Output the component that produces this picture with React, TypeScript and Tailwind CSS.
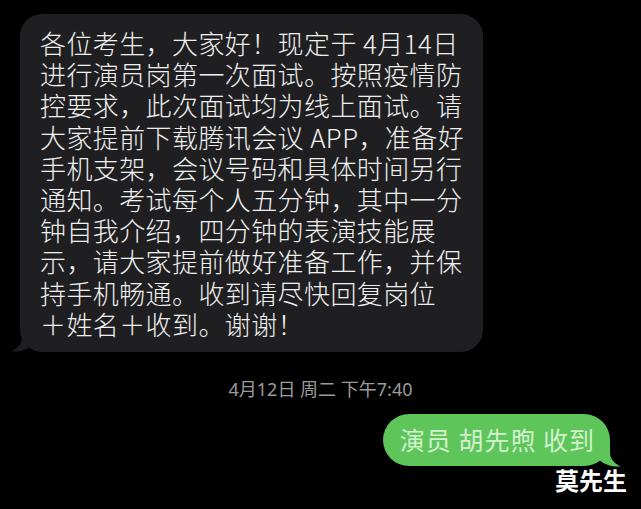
const lines = [
  '各位考生，大家好！现定于 4月14日',
  '进行演员岗第一次面试。按照疫情防',
  '控要求，此次面试均为线上面试。请',
  '大家提前下载腾讯会议 APP，准备好',
  '手机支架，会议号码和具体时间另行',
  '通知。考试每个人五分钟，其中一分',
  '钟自我介绍，四分钟的表演技能展',
  '示，请大家提前做好准备工作，并保',
  '持手机畅通。收到请尽快回复岗位',
  '＋姓名＋收到。谢谢！',
];

const App = () => {
  return (
    <div className="relative w-[641px] h-[509px] overflow-hidden bg-black flex flex-col font-['Noto_Sans_CJK_SC','Noto_Sans',sans-serif]">
      {/* incoming message */}
      <div className="pt-[14px] pl-[20px]">
        <div className="relative w-[463px] rounded-[22px] bg-[#1f1f21] px-[20px] py-[13px] text-[26px] leading-[31.2px] tracking-[0.4px] font-light text-[#f0f0f0]">
          {lines.map((l) => (
            <div key={l} className="whitespace-nowrap">{l}</div>
          ))}
          <svg className="absolute left-[-10px] bottom-0" width="24" height="26" viewBox="0 0 24 26">
            <path d="M12 0 L12 12 C12 18 7 23 1 25.5 C9 26 17 24 23 19 L24 0 Z" fill="#1f1f21" />
          </svg>
        </div>
      </div>

      {/* timestamp */}
      <div className="mt-[27px] text-center text-[18px] leading-[20px] text-[#9b9b9b] font-['Noto_Sans','Noto_Sans_CJK_SC',sans-serif]">
        4月12日 周二 下午7:40
      </div>

      {/* outgoing message */}
      <div className="mt-[15px] self-end mr-[31px] relative">
        <div className="relative rounded-full bg-[#5dc55a] h-[52px] pl-[17px] pr-[15px] flex items-center text-[25px] tracking-[1px] text-[#d3f1cd]">
          演员 胡先煦 收到
          <svg className="absolute right-[-12px] bottom-[-1px]" width="24" height="26" viewBox="0 0 24 26">
            <path d="M12 0 L12 12 C12 18 17 23 23 25.5 C15 26 7 24 1 19 L0 0 Z" fill="#5dc55a" />
          </svg>
        </div>
      </div>

      {/* watermark */}
      <div className="absolute left-[555px] top-[463px] text-[24px] leading-[34px] font-bold text-white">
        莫先生
      </div>
    </div>
  );
};

export default App;
